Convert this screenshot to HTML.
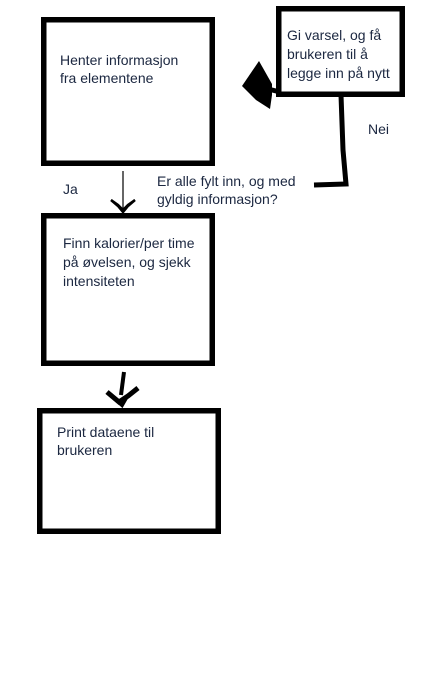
<!DOCTYPE html>
<html><head><style>
html,body{margin:0;padding:0;background:#fff;width:426px;height:700px;overflow:hidden}
svg{display:block}
text{font-family:"Liberation Sans",sans-serif;font-size:14px;fill:#1b2740}
</style></head><body>
<svg width="426" height="700" viewBox="0 0 426 700">
<g fill="none" stroke="#000" stroke-width="5.5">
<rect x="43.75" y="19.75" width="168.5" height="143.5"/>
<rect x="278.75" y="8.75" width="123.5" height="85.5"/>
<rect x="43.75" y="215.75" width="168.5" height="147.5"/>
<rect x="39.75" y="410.75" width="178.5" height="120.5"/>
</g>
<path d="M341 95 L343 150 L346 184 L314 185" fill="none" stroke="#000" stroke-width="5"/>
<path d="M280 92 L268 89" fill="none" stroke="#000" stroke-width="5"/>
<path d="M259 61 L272 84 L272 95 L270 109 L256 100 L242 86 Z" fill="#000"/>
<path d="M123 171 L123 210" stroke="#000" stroke-width="1.2"/>
<path d="M111 200 L118 206 L123 212 L128 206 L135 200 L128 205 L123 210 L118 205 Z" fill="none" stroke="#000" stroke-width="2.5"/>
<path d="M124 372 L121 395" stroke="#000" stroke-width="4"/>
<path d="M107 392 L119 402 L128 396 L138 388" fill="none" stroke="#000" stroke-width="5"/>
<path d="M114 398 L122 405 L126 398" fill="none" stroke="#000" stroke-width="4"/>
<text x="60" y="65">Henter informasjon</text>
<text x="60" y="83">fra elementene</text>
<text x="287" y="40">Gi varsel, og få</text>
<text x="287" y="59">brukeren til å</text>
<text x="287" y="78">legge inn på nytt</text>
<text x="368" y="134">Nei</text>
<text x="63" y="194">Ja</text>
<text x="157" y="186">Er alle fylt inn, og med</text>
<text x="157" y="204">gyldig informasjon?</text>
<text x="63" y="248">Finn kalorier/per time</text>
<text x="63" y="267">på øvelsen, og sjekk</text>
<text x="63" y="286">intensiteten</text>
<text x="57" y="437">Print dataene til</text>
<text x="57" y="455">brukeren</text>
</svg>
</body></html>
